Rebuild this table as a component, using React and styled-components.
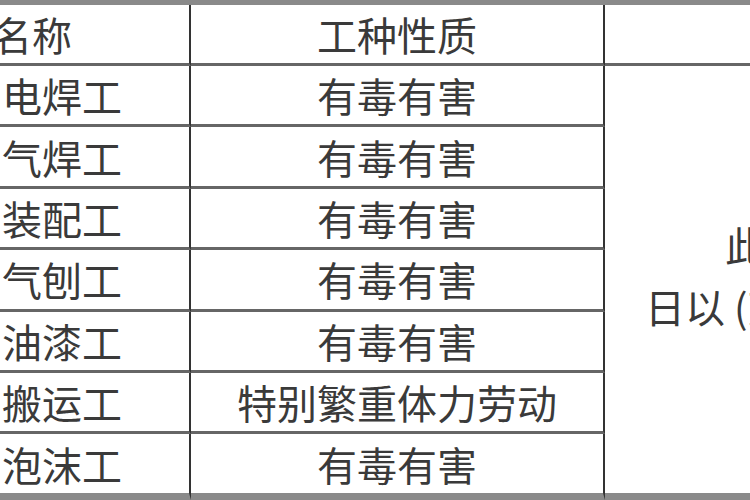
import React from 'react';
import styled, { createGlobalStyle } from 'styled-components';

const GlobalStyle = createGlobalStyle`
  html, body {
    margin: 0;
    padding: 0;
    background: #ffffff;
    overflow: hidden;
  }
`;

const Page = styled.div`
  width: 750px;
  height: 500px;
  overflow: hidden;
  background: #fff;
`;

const Table = styled.table`
  border-collapse: separate;
  border-spacing: 0;
  table-layout: fixed;
  width: 1010px;
  border-top: 5px solid #8a8a8a;
  font-family: "Noto Sans CJK SC", "Noto Sans CJK TC", sans-serif;
  font-weight: 400;
  font-size: 40px;
  color: #3a3a3a;
`;

const Cell = styled.td`
  height: ${p => (p.$head ? '58px' : '58.4px')};
  padding: 0 0 0 ${p => p.$pad || 0}px;
  text-align: ${p => p.$align || 'center'};
  vertical-align: middle;
  white-space: nowrap;
  line-height: 1;
  border-bottom: ${p => (p.$last ? '7px solid #8a8a8a' : '3px solid #666')};
  border-right: 2px solid #333;
  text-indent: ${p => p.$indent || 0}px;
  box-sizing: content-box;
`;

const NoteCell = styled.td`
  padding: 0 0 8px 40px;
  text-align: left;
  vertical-align: middle;
  white-space: nowrap;
  border-bottom: 7px solid #8a8a8a;
`;

const Note = styled.p`
  margin: 0;
  line-height: 62px;
  text-indent: 2em;
`;

const HeadNote = styled.td`
  border-bottom: 3px solid #666;
`;

const rows = [
  ['电焊工', '有毒有害'],
  ['气焊工', '有毒有害'],
  ['装配工', '有毒有害'],
  ['气刨工', '有毒有害'],
  ['油漆工', '有毒有害'],
  ['搬运工', '特别繁重体力劳动'],
  ['泡沫工', '有毒有害'],
];

export default function App() {
  return (
    <Page>
      <GlobalStyle />
      <Table>
        <colgroup>
          <col style={{ width: 191 }} />
          <col style={{ width: 414 }} />
          <col style={{ width: 405 }} />
        </colgroup>
        <tbody>
          <tr>
            <Cell $head $align="left" $indent={-8}>名称</Cell>
            <Cell $head>工种性质</Cell>
            <HeadNote />
          </tr>
          {rows.map(([name, kind], i) => (
            <tr key={name}>
              <Cell $align="left" $pad={2} $last={i === rows.length - 1}>{name}</Cell>
              <Cell $last={i === rows.length - 1}>{kind}</Cell>
              {i === 0 && (
                <NoteCell rowSpan={rows.length}>
                  <Note>
                    此表自二〇〇八年一月一
                    <br />
                    日以 (劳社部发) 文件执行
                  </Note>
                </NoteCell>
              )}
            </tr>
          ))}
        </tbody>
      </Table>
    </Page>
  );
}
